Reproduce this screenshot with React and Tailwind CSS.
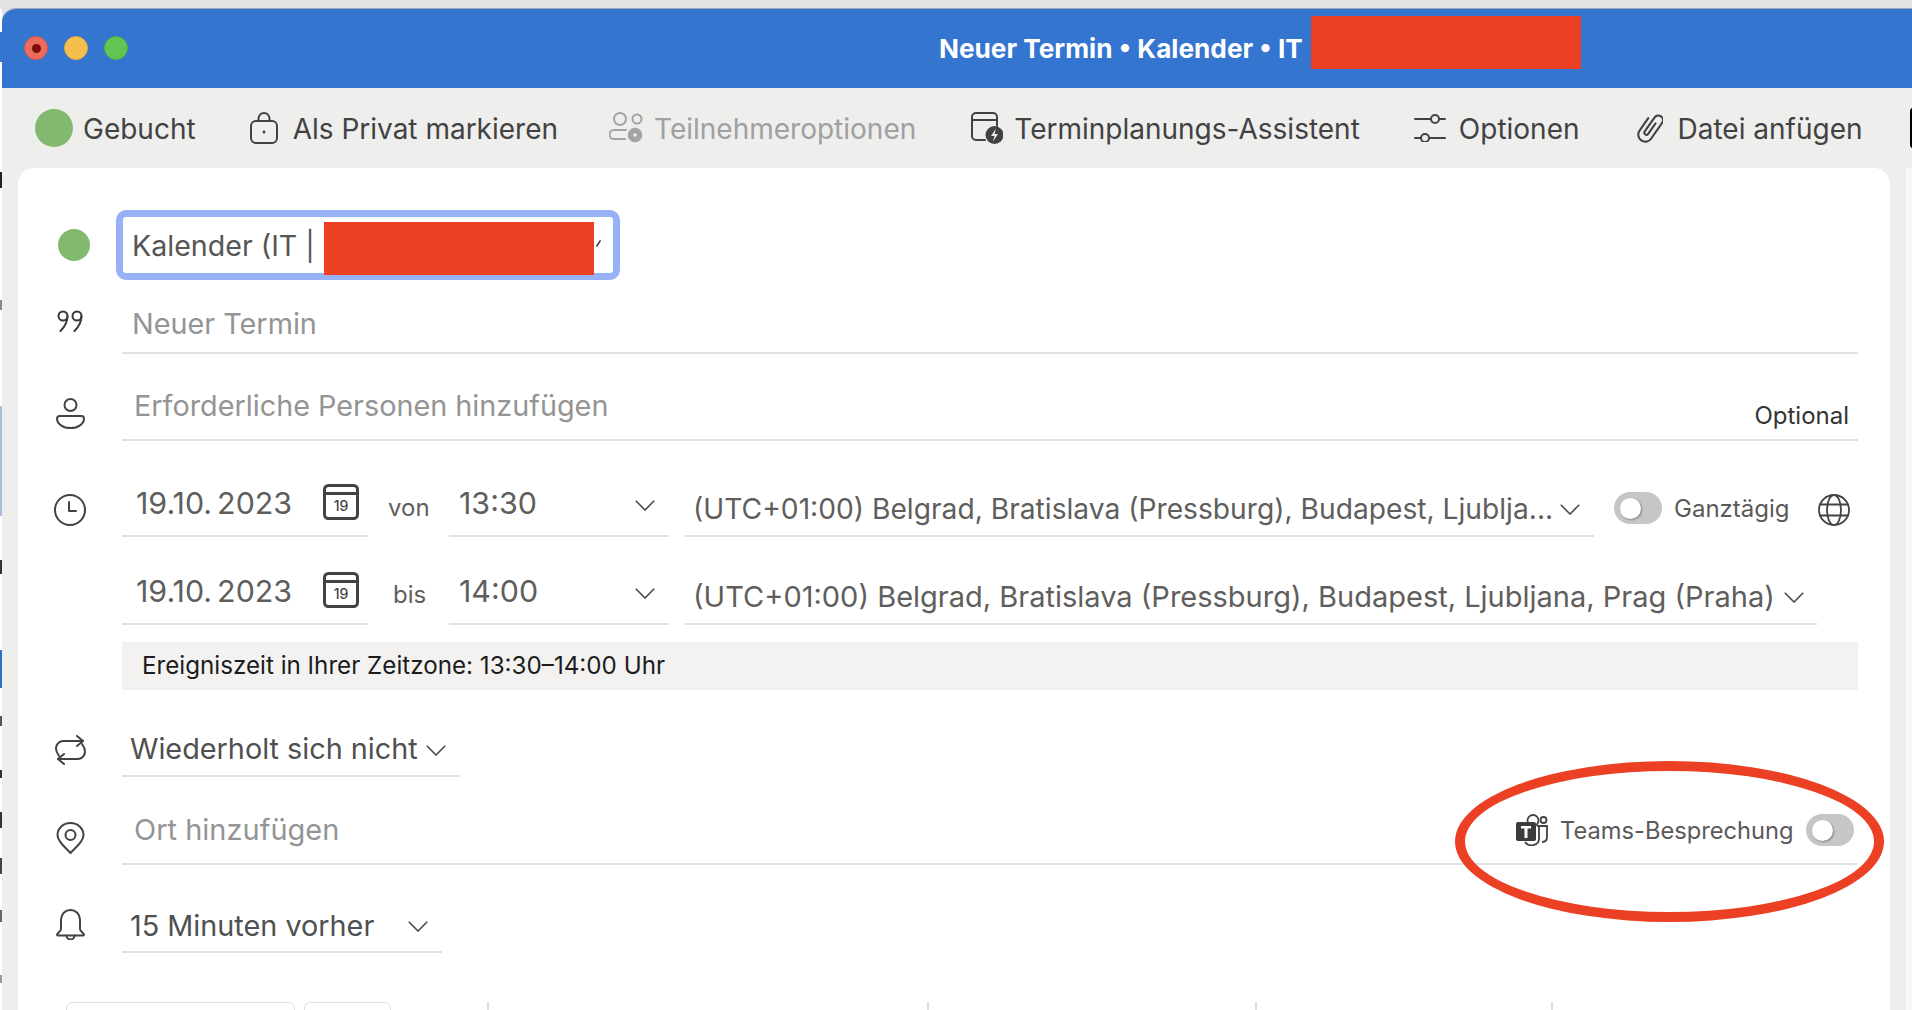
const D = "#424242";

function Svg({ w, h, children, color = D, sw = 2 }) {
  return (
    <svg width={w} height={h} viewBox={`0 0 ${w} ${h}`} fill="none" stroke={color} strokeWidth={sw} strokeLinecap="round" strokeLinejoin="round" className="shrink-0 block">
      {children}
    </svg>
  );
}

const Lock = () => (
  <Svg w={28} h={32}>
    <rect x="1" y="9" width="26" height="22" rx="5" />
    <path d="M8.5 9V6.5a5.5 5.5 0 0 1 11 0V9" />
    <circle cx="14" cy="20" r="1.5" fill={D} stroke="none" />
  </Svg>
);
const PeopleGear = () => (
  <Svg w={36} h={32} color="#a3a3a3">
    <circle cx="11" cy="7" r="6" />
    <circle cx="28" cy="7" r="4.5" />
    <path d="M17 18H5a4 4 0 0 0 0 9h11" />
    <circle cx="26" cy="23" r="5.5" fill="#a3a3a3" strokeWidth="3.5" strokeDasharray="2.8 1.5" />
    <circle cx="26" cy="23" r="1.8" fill="#eeeeed" stroke="none" />
  </Svg>
);
const Planner = () => (
  <Svg w={32} h={32}>
    <path d="M14 28H5a4 4 0 0 1-4-4V5a4 4 0 0 1 4-4h17a4 4 0 0 1 4 4v9" />
    <path d="M1 8h25" />
    <circle cx="23.5" cy="23" r="9" fill={D} stroke="none" />
    <path d="M25 16.5l-5 7.5h3.5l-1.5 5.5 5-7.5h-3.5z" fill="#eeeeed" stroke="none" />
  </Svg>
);
const Sliders = () => (
  <Svg w={32} h={28}>
    <path d="M1 5h16M25 5h6M1 24h6M15 24h16" />
    <circle cx="21" cy="5" r="4" />
    <circle cx="11" cy="24" r="4" />
  </Svg>
);
const Clip = () => (
  <Svg w={26} h={30}>
    <path transform="rotate(35 13 15) translate(13 15) scale(1.17) translate(-13 -15)" d="M7 9v13a6 6 0 0 0 12 0V5.5a4 4 0 0 0-8 0V20a1.8 1.8 0 0 0 3.6 0V9" strokeWidth="1.8" />
  </Svg>
);
const Quote = () => (
  <Svg w={26} h={22} color="#3a3a3a">
    <circle cx="6" cy="6" r="4.5" />
    <path d="M10.5 6c0 6-3 11-7 15" />
    <circle cx="20" cy="6" r="4.5" />
    <path d="M24.5 6c0 6-3 11-7 15" />
  </Svg>
);
const Person = () => (
  <Svg w={29} h={31}>
    <circle cx="14.5" cy="7" r="6" />
    <path d="M3.5 18h22a2.5 2.5 0 0 1 2.5 2.5c0 5.5-6 9.5-13.5 9.5S1 26 1 20.5A2.5 2.5 0 0 1 3.5 18z" />
  </Svg>
);
const Clock = () => (
  <Svg w={32} h={32}>
    <circle cx="16" cy="16" r="15" />
    <path d="M15 8v9h7" />
  </Svg>
);
const Cal = () => (
  <svg width="36" height="36" viewBox="0 0 36 36" fill="none" className="shrink-0 block">
    <rect x="1.5" y="1.5" width="33" height="33" rx="4" stroke="#424242" strokeWidth="3" />
    <path d="M2 9.5h32" stroke="#424242" strokeWidth="3" />
    <text x="18" y="27" textAnchor="middle" fontFamily="Inter, sans-serif" fontSize="14" fontWeight="500" fill="#424242">19</text>
  </svg>
);
const Chev = ({ w = 20, h = 11, color = "#4a4a4a" }) => (
  <svg width={w} height={h} viewBox={`0 0 ${w} ${h}`} fill="none" stroke={color} strokeWidth="1.6" className="shrink-0 block">
    <path d={`M0.8 0.8L${w / 2} ${h - 1}L${w - 0.8} 0.8`} />
  </svg>
);
const Globe = () => (
  <Svg w={32} h={32} sw={1.8}>
    <circle cx="16" cy="16" r="15" />
    <ellipse cx="16" cy="16" rx="7" ry="15" />
    <path d="M2 10.5h28M2 21.5h28" />
  </Svg>
);
const Repeat = () => (
  <Svg w={33} h={30}>
    <path d="M5 21C-1 13 3 6 10 6h19" />
    <path d="M19 1l6 5-6 5" transform="translate(4 0)" />
    <path d="M28 9c6 8 2 15-5 15H4" />
    <path d="M14 19l-6 5 6 5" transform="translate(-4 0)" />
  </Svg>
);
const Pin = () => (
  <Svg w={29} h={32}>
    <path d="M14.5 31C10 26 1.5 20 1.5 13a13 12 0 0 1 26 0c0 7-8.5 13-13 18z" />
    <circle cx="14.5" cy="13" r="5" />
  </Svg>
);
const Bell = () => (
  <Svg w={29} h={31}>
    <path d="M5 10.5a9.5 9.5 0 0 1 19 0V20c0 2 3 3.5 4 5.5 0 .5-.5 1-1 1H2c-.5 0-1-.5-1-1C2 23.5 5 22 5 20z" />
    <path d="M10.5 26.5a4 4 0 0 0 8 0" />
  </Svg>
);
const Teams = () => (
  <svg width="32" height="32" viewBox="0 0 32 32" fill="none" className="shrink-0 block">
    <circle cx="17" cy="6.5" r="5.5" stroke="#424242" strokeWidth="1.8" />
    <circle cx="27.5" cy="6" r="3" stroke="#424242" strokeWidth="1.8" />
    <path d="M24 12h7v11c0 3-2 5-5 5" stroke="#424242" strokeWidth="1.8" />
    <path d="M21 12h2v13a7.5 6.5 0 0 1-14 3" stroke="#424242" strokeWidth="1.8" />
    <rect x="0" y="8" width="20" height="19" rx="2" fill="#3c3c3c" />
    <path d="M5 12h10v2.5h-3.5V24h-3v-9.5H5z" fill="#ffffff" />
  </svg>
);

function Toggle() {
  return (
    <div className="w-[48px] h-[32px] rounded-full bg-[#c8c6c4] flex items-center pl-[6px] shrink-0">
      <div className="w-[21px] h-[21px] rounded-full bg-white shadow-[1px_1px_2px_rgba(0,0,0,0.35)]" />
    </div>
  );
}

function Tool({ icon, label, muted, className = "" }) {
  return (
    <div className={`flex items-center ${className}`}>
      {icon}
      <span className={`text-[28px] leading-[40px] mt-[2px] whitespace-nowrap ${muted ? "text-[#a0a0a0]" : "text-[#424242]"}`}>{label}</span>
    </div>
  );
}

function Row({ icon, h, children, iconClass = "" }) {
  return (
    <div className="flex" style={{ height: h }}>
      <div className={`w-[104px] shrink-0 pl-[38px] ${iconClass}`}>{icon}</div>
      {children}
    </div>
  );
}

const EDGE = [
  [32, 30, "#3475cf"], [172, 16, "#222222"], [300, 10, "#888888"], [406, 110, "#a9bfe0"],
  [560, 14, "#333333"], [650, 38, "#2f6fc4"], [716, 10, "#555555"], [770, 8, "#333333"],
  [812, 16, "#333333"], [858, 16, "#444444"], [910, 12, "#666666"], [975, 8, "#999999"],
];

export default function App() {
  return (
    <div className="relative w-[1912px] h-[1010px] overflow-hidden bg-[#e2e2e2] pt-[8px]" style={{ fontFamily: "Inter, 'Liberation Sans', sans-serif" }}>
      <div className="absolute left-0 top-[9px] w-[2px] h-[1001px] bg-white">
        {EDGE.map(([top, height, background]) => (
          <div key={top} className="absolute left-0 w-[2px]" style={{ top: top - 9, height, background }} />
        ))}
      </div>
      <div className="relative ml-[2px] h-[1002px] flex flex-col rounded-tl-[14px] overflow-hidden border-t border-[#9aa7ba] bg-[#eeeeed]">
        {/* title bar */}
        <div className="h-[79px] shrink-0 bg-[#3475cf] relative flex items-start">
          <div className="flex gap-[16px] pl-[22px] pt-[27px]">
            <div className="w-[24px] h-[24px] rounded-full bg-[#ec6a5e] border border-[#d65548] flex items-center justify-center">
              <div className="w-[9px] h-[9px] rounded-full bg-[#7d0f06]" />
            </div>
            <div className="w-[24px] h-[24px] rounded-full bg-[#f5bf4f] border border-[#dfa63d]" />
            <div className="w-[24px] h-[24px] rounded-full bg-[#61c554] border border-[#4fae43]" />
          </div>
          <div className="ml-[811px] pt-[21px] text-[26.2px] leading-[38px] font-bold text-white whitespace-nowrap w-[372px]">Neuer Termin • Kalender • IT</div>
          <div className="mt-[7px] w-[270px] h-[53px] bg-[#ec4024]" />
        </div>

        {/* toolbar */}
        <div className="h-[80px] shrink-0 flex items-center pl-[33px] relative">
          <div className="w-[38px] h-[38px] rounded-full bg-[#83b96f] mr-[10px] shrink-0" />
          <Tool label="Gebucht" />
          <Tool className="ml-[54px] gap-[15px]" icon={<Lock />} label="Als Privat markieren" />
          <Tool className="ml-[51px] gap-[9px]" icon={<PeopleGear />} label="Teilnehmeroptionen" muted />
          <Tool className="ml-[55px] gap-[11px]" icon={<Planner />} label="Terminplanungs-Assistent" />
          <Tool className="ml-[54px] gap-[13px]" icon={<Sliders />} label="Optionen" />
          <Tool className="ml-[57px] gap-[15px]" icon={<Clip />} label="Datei anfügen" />
          <div className="absolute right-[-6px] top-[20px] w-[8px] h-[40px] bg-black rounded-[3px]" />
        </div>

        {/* card + right rail */}
        <div className="flex-1 flex min-h-0">
          <div className="ml-[16px] w-[1872px] bg-white rounded-t-[16px] pt-[42px] pr-[32px] overflow-hidden">
            <Row h={70} iconClass="pt-[19px]" icon={<div className="w-[32px] h-[32px] rounded-full bg-[#83b96f] ml-[2px]" />}>
              <div className="ml-[-6px] w-[504px] h-[70px] rounded-[10px] border-[7px] border-[#97b1f5] flex items-center pl-[9px] relative">
                <span className="text-[28.6px] mt-[2px] text-[#555] whitespace-nowrap">Kalender (IT | (</span>
                <div className="absolute left-[201px] top-[5px] w-[270px] h-[53px] bg-[#ec4024]" />
                <svg width="5" height="7" viewBox="0 0 5 7" className="absolute left-[473px] top-[23px]" fill="none" stroke="#333" strokeWidth="1.4"><path d="M0.5 6.5L4.5 0.5" /></svg>
              </div>
            </Row>
            <Row h={74} iconClass="pt-[30px] pl-[39px]" icon={<Quote />}>
              <div className="flex-1 border-b-2 border-[#e1e1e1] pl-[10px] pt-[25px] text-[28.8px] leading-[38px] text-[#949494]">Neuer Termin</div>
            </Row>
            <Row h={87} iconClass="pt-[44px]" icon={<Person />}>
              <div className="flex-1 border-b-2 border-[#e1e1e1] pl-[12px] pr-[9px] flex justify-between pt-[32px]">
                <span className="text-[28.8px] leading-[40px] text-[#949494]">Erforderliche Personen hinzufügen</span>
                <span className="text-[24px] leading-[30px] text-[#333] mt-[15px]">Optional</span>
              </div>
            </Row>
            <Row h={96} iconClass="pt-[53px]" icon={<div className="-ml-[2px]"><Clock /></div>}>
              <DateLine time="13:30" word="von" wordClass="ml-[20px] w-[61px]" tz="(UTC+01:00) Belgrad, Bratislava (Pressburg), Budapest, Ljublja..." tzW={909} chevGap={7} tzClass="text-[28.2px]" />
              <div className="ml-[20px] mt-[51px] flex h-[32px] items-center">
                <Toggle />
                <span className="ml-[12px] mt-[2px] text-[24px] text-[#5a5a5a] whitespace-nowrap w-[144px]">Ganztägig</span>
                <div className="mt-[4px]"><Globe /></div>
              </div>
            </Row>
            <Row h={88}>
              <DateLine time="14:00" word="bis" wordClass="ml-[25px] w-[56px]" tz="(UTC+01:00) Belgrad, Bratislava (Pressburg), Budapest, Ljubljana, Prag (Praha)" tzW={1132} chevGap={9} tzClass="text-[29px]" short />
            </Row>
            <div className="ml-[104px] mt-[17px] h-[48px] bg-[#f3f2f1] flex items-center pl-[20px] text-[24.2px] text-[#1c1c1c]">Ereigniszeit in Ihrer Zeitzone: 13:30–14:00 Uhr</div>
            <Row h={87} iconClass="pt-[45px]" icon={<div className="-ml-[2px]"><Repeat /></div>}>
              <div className="w-[338px] border-b-2 border-[#e1e1e1] pl-[8px] pt-[33px] flex items-center h-[87px]">
                <span className="text-[28.8px] leading-[40px] text-[#505050] whitespace-nowrap">Wiederholt sich nicht</span>
                <span className="ml-[8px] mt-[2px]"><Chev /></span>
              </div>
            </Row>
            <Row h={88} iconClass="pt-[45px]" icon={<Pin />}>
              <div className="flex-1 border-b-2 border-[#e1e1e1] pl-[12px] pr-[4px] pt-[33px] flex justify-between">
                <span className="text-[29px] leading-[40px] text-[#949494]">Ort hinzufügen</span>
                <div className="flex items-center h-[32px] mt-[4px]">
                  <Teams />
                  <span className="ml-[12px] mt-[2px] text-[23.7px] text-[#5a5a5a] whitespace-nowrap w-[246px]">Teams-Besprechung</span>
                  <Toggle />
                </div>
              </div>
            </Row>
            <Row h={88} iconClass="pt-[44px]" icon={<Bell />}>
              <div className="w-[320px] border-b-2 border-[#e1e1e1] pl-[8px] pt-[36px] flex items-center h-[88px]">
                <span className="text-[28.8px] leading-[40px] text-[#505050] whitespace-nowrap w-[278px]">15 Minuten vorher</span>
                <Chev />
              </div>
            </Row>
            <div className="mt-[49px] flex h-[10px]">
              <div className="ml-[48px] w-[229px] h-[12px] border border-[#dedede] rounded-t-[6px]" />
              <div className="ml-[9px] w-[87px] h-[12px] border border-[#dedede] rounded-t-[6px]" />
              <div className="ml-[96px] w-[2px] h-full bg-[#dedede]" />
              <div className="ml-[438px] w-[2px] h-full bg-[#dedede]" />
              <div className="ml-[326px] w-[2px] h-full bg-[#dedede]" />
              <div className="ml-[294px] w-[2px] h-full bg-[#dedede]" />
            </div>
          </div>
          <div className="ml-[16px] flex-1 bg-[#f8f8f8]" />
        </div>
      </div>

      {/* annotation */}
      <div className="absolute left-[1455px] top-[761px] w-[429px] h-[161px] rounded-[50%] border-[10px] border-[#ec4024]" />
    </div>
  );
}

function DateLine({ time, word, wordClass, tz, tzW, chevGap, tzClass, short }) {
  const height = short ? "h-[88px]" : "h-[96px]";
  return (
    <>
      <div className={`w-[246px] border-b-2 border-[#e1e1e1] flex items-end justify-between pl-[14px] pr-[9px] pb-[15px] ${height}`}>
        <span className="text-[30.4px] leading-[36px] -mb-[1px] text-[#605e5c] whitespace-nowrap">19.10.<span className="ml-[5px]">2023</span></span>
        <Cal />
      </div>
      <span className={`text-[24px] leading-[32px] text-[#605e5c] ${wordClass} ${short ? "mt-[42px]" : "mt-[51px]"}`}>{word}</span>
      <div className={`w-[220px] border-b-2 border-[#e1e1e1] flex items-end justify-between pl-[10px] pr-[14px] pb-[15px] ${height}`}>
        <span className="text-[30.4px] leading-[36px] -mb-[1px] text-[#605e5c]">{time}</span>
        <span className="mb-[9px]"><Chev /></span>
      </div>
      <div className={`ml-[16px] border-b-2 border-[#e1e1e1] flex items-end pl-[8px] pb-[6px] shrink-0 ${height}`} style={{ width: tzW }}>
        <span className={`leading-[40px] text-[#605e5c] whitespace-nowrap ${tzClass}`}>{tz}</span>
        <span className="mb-[14px]" style={{ marginLeft: chevGap }}><Chev /></span>
      </div>
    </>
  );
}
